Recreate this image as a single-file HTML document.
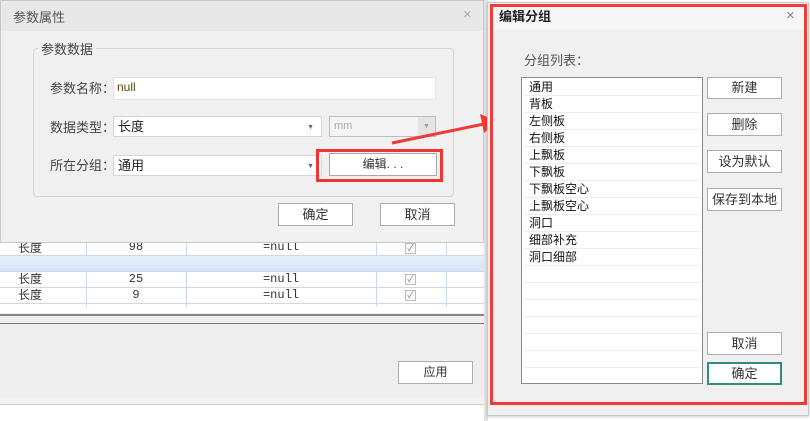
<!DOCTYPE html>
<html><head><meta charset="utf-8"><style>
*{margin:0;padding:0;box-sizing:border-box}
body{width:810px;height:421px;position:relative;overflow:hidden;background:#fff;font-family:"Liberation Sans","Noto Sans CJK SC",sans-serif;font-size:12px;color:#222}
.a{position:absolute}
.btn{position:absolute;background:#fff;border:1px solid #adadad;text-align:center;font-size:12px;color:#333}
.cell{position:absolute;font-family:"Liberation Mono","WenQuanYi Zen Hei",monospace;font-size:12px;color:#333;text-align:center}
.vl{position:absolute;width:1px;background:#c9d9ec}
.hl{position:absolute;height:1px;background:#c9d9ec;left:0;width:484px}
.cb{position:absolute;width:11px;height:11px;border:1px solid #bbb;background:#f8f8f8;font-size:9px;line-height:9px;color:#888;text-align:center}
.li{position:absolute;left:529px;font-size:12px;color:#111;height:17px;line-height:17px}
.ll{position:absolute;left:524px;width:177px;height:1px;background:#ececec}
</style></head><body>
<div class="a" style="left:0;top:0;width:488px;height:313px;background:#fff"></div>
<div class="a" style="left:0;top:255px;width:484px;height:16px;background:linear-gradient(#e6f0fb,#d3e5f7)"></div>
<div class="hl" style="top:255px"></div><div class="hl" style="top:271px"></div><div class="hl" style="top:287px"></div><div class="hl" style="top:303px"></div>
<div class="vl" style="left:86px;top:243px;height:12px"></div><div class="vl" style="left:186px;top:243px;height:12px"></div><div class="vl" style="left:376px;top:243px;height:12px"></div><div class="vl" style="left:446px;top:243px;height:12px"></div>
<div class="vl" style="left:86px;top:271px;height:36px"></div><div class="vl" style="left:186px;top:271px;height:36px"></div><div class="vl" style="left:376px;top:271px;height:36px"></div><div class="vl" style="left:446px;top:271px;height:36px"></div>
<div class="cell" style="left:0;width:60px;top:239px">长度</div><div class="cell" style="left:86px;width:100px;top:240px">98</div><div class="cell" style="left:186px;width:190px;top:240px">=null</div><div class="cb" style="left:405px;top:243px">✓</div>
<div class="cell" style="left:0;width:60px;top:270px">长度</div><div class="cell" style="left:86px;width:100px;top:272px">25</div><div class="cell" style="left:186px;width:190px;top:272px">=null</div><div class="cb" style="left:405px;top:274px">✓</div>
<div class="cell" style="left:0;width:60px;top:286px">长度</div><div class="cell" style="left:86px;width:100px;top:288px">9</div><div class="cell" style="left:186px;width:190px;top:288px">=null</div><div class="cb" style="left:405px;top:290px">✓</div>
<div class="a" style="left:0;top:307px;width:484px;height:6px;background:#fff"></div>
<div class="a" style="left:0;top:313px;width:488px;height:92px;background:#eeeeee"></div>
<div class="a" style="left:0;top:314px;width:484px;height:2px;background:#888"></div>
<div class="a" style="left:0;top:323px;width:484px;height:1px;background:#777"></div>
<div class="a" style="left:0;top:397px;width:484px;height:7px;background:#f2f2f2"></div>
<div class="a" style="left:0;top:404px;width:484px;height:1px;background:#ccc"></div>
<div class="btn" style="left:398px;top:361px;width:75px;height:23px;line-height:21px">应用</div>
<div class="a" style="left:484px;top:0;width:4px;height:421px;background:#e4e4e4"></div>
<div class="a" style="left:0;top:0;width:484px;height:243px;background:#f0f0f0;border:1px solid #c8c8c8"></div>
<div class="a" style="left:1px;top:1px;width:482px;height:30px;background:#e8e8e8"></div>
<div class="a" style="left:13px;top:7px;font-size:13px;color:#555">参数属性</div>
<div class="a" style="left:463px;top:6px;font-size:15px;color:#aaa">×</div>
<div class="a" style="left:33px;top:48px;width:421px;height:149px;border:1px solid #d6d6d6;border-radius:4px"></div>
<div class="a" style="left:38px;top:39px;padding:0 3px;background:#f0f0f0;font-size:13px;color:#444">参数数据</div>
<div class="a" style="left:50px;top:78px;font-size:13px;color:#444">参数名称：</div>
<div class="a" style="left:113px;top:77px;width:323px;height:23px;background:#fff;border:1px solid #e2e2e2;padding:2px 3px;font-size:12px;color:#5a4a10">null</div>
<div class="a" style="left:50px;top:117px;font-size:13px;color:#444">数据类型：</div>
<div class="a" style="left:113px;top:116px;width:209px;height:21px;background:#fff;border:1px solid #d6d6d6;padding:0 4px;font-size:13px;line-height:19px">长度<span style="position:absolute;right:7px;top:1px;font-size:7px;color:#666">▼</span></div>
<div class="a" style="left:329px;top:116px;width:107px;height:21px;background:#f4f4f4;border:1px solid #bdbdbd;padding:3px 4px;font-size:11px;color:#aaa">mm<span style="position:absolute;right:0;top:0;width:17px;height:19px;background:#e4e4e4;font-size:7px;color:#999;text-align:center;line-height:19px">▼</span></div>
<div class="a" style="left:50px;top:155px;font-size:13px;color:#444">所在分组：</div>
<div class="a" style="left:113px;top:155px;width:209px;height:21px;background:#fff;border:1px solid #d6d6d6;padding:0 4px;font-size:13px;line-height:19px">通用<span style="position:absolute;right:7px;top:1px;font-size:7px;color:#666">▼</span></div>
<div class="btn" style="left:329px;top:153px;width:108px;height:23px;line-height:21px;border-color:#a8a8a8;font-size:12px">编辑. . .</div>
<div class="a" style="left:316px;top:149px;width:127px;height:33px;border:3px solid #f03434"></div>
<div class="btn" style="left:278px;top:203px;width:75px;height:23px;line-height:21px;font-size:13px">确定</div>
<div class="btn" style="left:380px;top:203px;width:75px;height:23px;line-height:21px;font-size:13px">取消</div>
<svg class="a" style="left:0;top:0" width="810" height="421"><line x1="392" y1="143" x2="484" y2="124" stroke="#f03a3a" stroke-width="3"/><polygon points="497,121 480,114 484,133" fill="#f03a3a"/></svg>
<div class="a" style="left:487px;top:2px;width:322px;height:414px;background:#f0f0f0;border:1px solid #c8c8c8;box-shadow:0 1px 3px rgba(0,0,0,.2)"></div>
<div class="a" style="left:492px;top:7px;width:312px;height:23px;background:#f6f6f6"></div>
<div class="a" style="left:499px;top:6px;font-size:13px;font-weight:bold;color:#222">编辑分组</div>
<div class="a" style="left:786px;top:7px;font-size:15px;color:#888">×</div>
<div class="a" style="left:490px;top:4px;width:317px;height:401px;border:3px solid #f23a3a"></div>
<div class="a" style="left:524px;top:50px;font-size:13px;color:#555">分组列表：</div>
<div class="a" style="left:521px;top:77px;width:182px;height:307px;background:#fff;border:1px solid #8a8a8a"></div>
<div class="li" style="top:79px">通用</div><div class="li" style="top:96px">背板</div><div class="li" style="top:113px">左侧板</div><div class="li" style="top:130px">右侧板</div><div class="li" style="top:147px">上飘板</div><div class="li" style="top:164px">下飘板</div><div class="li" style="top:181px">下飘板空心</div><div class="li" style="top:198px">上飘板空心</div><div class="li" style="top:215px">洞口</div><div class="li" style="top:232px">细部补充</div><div class="li" style="top:249px">洞口细部</div>
<div class="ll" style="top:95px"></div><div class="ll" style="top:112px"></div><div class="ll" style="top:129px"></div><div class="ll" style="top:146px"></div><div class="ll" style="top:163px"></div><div class="ll" style="top:180px"></div><div class="ll" style="top:197px"></div><div class="ll" style="top:214px"></div><div class="ll" style="top:231px"></div><div class="ll" style="top:248px"></div><div class="ll" style="top:265px"></div><div class="ll" style="top:282px"></div><div class="ll" style="top:299px"></div><div class="ll" style="top:316px"></div><div class="ll" style="top:333px"></div><div class="ll" style="top:350px"></div><div class="ll" style="top:367px"></div>
<div class="btn" style="left:707px;top:77px;width:75px;height:22px;line-height:20px;font-size:13px">新建</div>
<div class="btn" style="left:707px;top:113px;width:75px;height:23px;line-height:21px;font-size:13px">删除</div>
<div class="btn" style="left:707px;top:150px;width:75px;height:23px;line-height:21px;font-size:13px">设为默认</div>
<div class="btn" style="left:707px;top:188px;width:75px;height:23px;line-height:21px;font-size:13px">保存到本地</div>
<div class="btn" style="left:707px;top:332px;width:75px;height:23px;line-height:21px;font-size:13px">取消</div>
<div class="btn" style="left:707px;top:362px;width:75px;height:23px;line-height:19px;font-size:13px;border:2px solid #2e8e7c">确定</div>
</body></html>
